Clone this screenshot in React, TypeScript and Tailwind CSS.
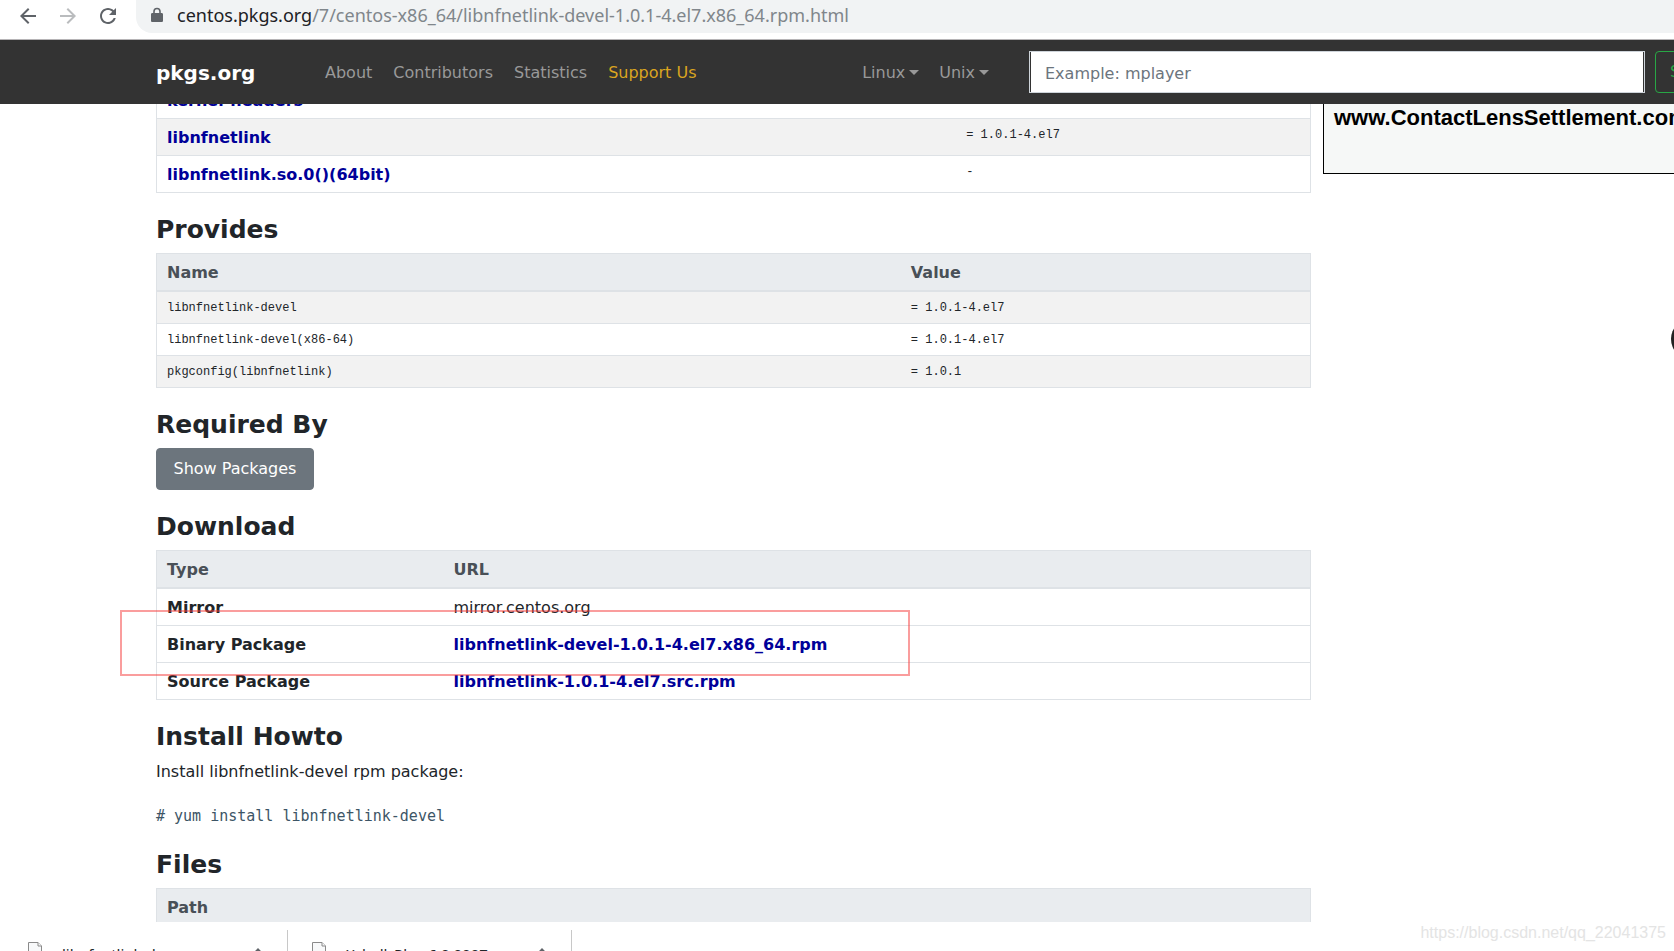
import type { ReactNode } from 'react'

const REQUIRES = [
  { name: 'kernel-headers', value: '' },
  { name: 'libnfnetlink', value: '= 1.0.1-4.el7' },
  { name: 'libnfnetlink.so.0()(64bit)', value: '-' },
]

const PROVIDES = [
  { name: 'libnfnetlink-devel', value: '= 1.0.1-4.el7' },
  { name: 'libnfnetlink-devel(x86-64)', value: '= 1.0.1-4.el7' },
  { name: 'pkgconfig(libnfnetlink)', value: '= 1.0.1' },
]

const DOWNLOADS = [
  { type: 'Binary Package', file: 'libnfnetlink-devel-1.0.1-4.el7.x86_64.rpm' },
  { type: 'Source Package', file: 'libnfnetlink-1.0.1-4.el7.src.rpm' },
]

const mono = "font-['Liberation_Mono',monospace] text-xs leading-[19px]"
const cell = 'border border-[#dee2e6] px-2.5 pb-[5px] pt-[7px] text-left'
const headCell =
  'border border-b-2 border-[#dee2e6] bg-[#e9ecef] px-2.5 pb-[5px] pt-[7px] text-left font-bold text-[#495057]'
const fileLink = 'font-bold text-[#000099]'

function BrowserBar() {
  return (
    <div className="flex h-10 shrink-0 items-start border-b border-[#b6b4b6] bg-white">
      <div className="flex h-8 items-center gap-4 px-4">
        <button aria-label="Back" className="h-6 w-6 text-[#5f6368]">
          <svg viewBox="0 0 24 24" className="h-6 w-6" fill="currentColor">
            <path d="M20 11H7.83l5.59-5.59L12 4l-8 8 8 8 1.41-1.41L7.83 13H20v-2z" />
          </svg>
        </button>
        <button aria-label="Forward" className="h-6 w-6 text-[#babcbe]">
          <svg viewBox="0 0 24 24" className="h-6 w-6" fill="currentColor">
            <path d="M12 4l-1.41 1.41L16.17 11H4v2h12.17l-5.58 5.59L12 20l8-8z" />
          </svg>
        </button>
        <button aria-label="Reload" className="h-6 w-6 text-[#5f6368]">
          <svg viewBox="0 0 24 24" className="h-6 w-6" fill="currentColor">
            <path d="M17.65 6.35C16.2 4.9 14.21 4 12 4c-4.42 0-7.99 3.58-7.99 8s3.57 8 7.99 8c3.73 0 6.84-2.55 7.73-6h-2.08c-.82 2.33-3.04 4-5.65 4-3.31 0-6-2.69-6-6s2.69-6 6-6c1.66 0 3.14.69 4.22 1.78L13 11h7V4l-2.35 2.35z" />
          </svg>
        </button>
      </div>
      <div className="flex h-[33px] flex-1 items-center gap-3.5 rounded-bl-2xl bg-[#f1f3f4] pb-[3px] pl-[15px]">
        <svg viewBox="0 0 12 16" className="h-4 w-3" fill="#5f6368">
          <path d="M10.7 6H9.8V4.6a3.8 3.8 0 0 0-7.6 0V6h-.9C.6 6 0 6.6 0 7.3v6.4c0 .7.6 1.3 1.3 1.3h9.4c.7 0 1.3-.6 1.3-1.3V7.3C12 6.6 11.4 6 10.7 6zM8.2 6H3.8V4.5a2.2 2.2 0 0 1 4.4 0V6z" />
        </svg>
        <div className="whitespace-nowrap font-['Noto_Sans',sans-serif] text-lg leading-6 text-[#80868b]">
          <span className="text-[#202124]">centos.pkgs.org</span>
          /7/centos-x86_64/libnfnetlink-devel-1.0.1-4.el7.x86_64.rpm.html
        </div>
      </div>
    </div>
  )
}

function Caret() {
  return (
    <span className="ml-1 inline-block border-x-[5px] border-t-[5px] border-x-transparent border-t-current align-[3px]" />
  )
}

function Navbar() {
  return (
    <header className="z-10 flex h-16 shrink-0 items-center bg-[#333333] pl-[156px] text-[#999999]">
      <a href="#" className="w-[159px] pt-0.5 text-xl font-bold leading-[30px] text-white">
        pkgs.org
      </a>
      <nav className="flex flex-1 gap-px whitespace-nowrap pt-0.5">
        <a href="#about" className="px-2.5">About</a>
        <a href="#contributors" className="px-2.5">Contributors</a>
        <a href="#statistics" className="px-2.5">Statistics</a>
        <a href="#support" className="px-2.5 text-[#daa520]">Support Us</a>
      </nav>
      <div className="mr-[30px] flex whitespace-nowrap pt-0.5">
        <button className="px-2.5">Linux<Caret /></button>
        <button className="px-2.5">Unix<Caret /></button>
      </div>
      <form className="flex w-[645px] shrink-0 gap-2.5 overflow-hidden">
        <div className="w-[616px] shrink-0 border border-[#ced4da] px-px">
          <input
            type="text"
            aria-label="Search packages"
            placeholder="Example: mplayer"
            className="block h-10 w-full bg-white px-3.5 pt-0.5 text-base text-[#495057] placeholder:text-[#6c757d]"
          />
        </div>
        <button className="shrink-0 rounded border border-[#28a745] px-3.5 text-[#28a745]">
          Search
        </button>
      </form>
    </header>
  )
}

function Heading({ children }: { children: ReactNode }) {
  return (
    <h2 className="mb-2 mt-[22px] text-[25px] font-bold leading-[30px] text-[#212529]">
      {children}
    </h2>
  )
}

function RequiresTable() {
  return (
    <table className="w-full table-fixed border-collapse">
      <colgroup>
        <col className="w-[69.3%]" />
        <col />
      </colgroup>
      <tbody>
        {REQUIRES.map((row) => (
          <tr key={row.name} className="even:bg-[#f2f2f2]">
            <td className={`${cell} border-r-0`}>
              <a href="#" className={fileLink}>{row.name}</a>
            </td>
            <td className={`${cell} ${mono} border-l-0 align-top`}>{row.value}</td>
          </tr>
        ))}
      </tbody>
    </table>
  )
}

function ProvidesTable() {
  return (
    <table className="w-full table-fixed border-collapse">
      <colgroup>
        <col className="w-[64.5%]" />
        <col />
      </colgroup>
      <thead>
        <tr>
          <th className={`${headCell} border-r-0`}>Name</th>
          <th className={`${headCell} border-l-0`}>Value</th>
        </tr>
      </thead>
      <tbody>
        {PROVIDES.map((row) => (
          <tr key={row.name} className="odd:bg-[#f2f2f2]">
            <td className={`${cell} ${mono} border-r-0`}>{row.name}</td>
            <td className={`${cell} ${mono} border-l-0`}>{row.value}</td>
          </tr>
        ))}
      </tbody>
    </table>
  )
}

function DownloadTable() {
  return (
    <div className="relative">
      <table className="w-full table-fixed border-collapse">
        <colgroup>
          <col className="w-[287px]" />
          <col />
        </colgroup>
        <thead>
          <tr>
            <th className={`${headCell} border-r-0`}>Type</th>
            <th className={`${headCell} border-l-0`}>URL</th>
          </tr>
        </thead>
        <tbody>
          <tr>
            <th className={`${cell} border-r-0`}>Mirror</th>
            <td className={`${cell} border-l-0`}>mirror.centos.org</td>
          </tr>
          {DOWNLOADS.map((row) => (
            <tr key={row.file}>
              <th className={`${cell} border-r-0`}>{row.type}</th>
              <td className={`${cell} border-l-0`}>
                <a href="#" className={fileLink}>{row.file}</a>
              </td>
            </tr>
          ))}
        </tbody>
      </table>
      {/* marker around the binary package row */}
      <div className="pointer-events-none absolute -left-9 top-[60px] h-[66px] w-[790px] border-2 border-[#f53b3b]/50" />
    </div>
  )
}

function DownloadItem({ name }: { name: string }) {
  return (
    <div className="flex w-[284px] items-start justify-between border-r border-[#c8c8c8] pl-6 pr-6 pt-3">
      <div className="flex gap-5">
        <svg viewBox="0 0 14 18" className="h-[18px] w-3.5" fill="#f8f9fa" stroke="#8a8a8a">
          <path d="M.5.5h9.5l3.5 3.5v13.5H.5z" />
          <path d="M10 .5V4h3.5" />
        </svg>
        <span className="whitespace-nowrap pt-0.5 font-['Noto_Sans',sans-serif] text-[15px] leading-5">
          {name}
        </span>
      </div>
      <button aria-label="Show menu" className="pt-1.5">
        <svg viewBox="0 0 10 6" className="h-1.5 w-2.5" fill="none" stroke="#5f6368" strokeWidth="2">
          <path d="M1 5.5l4-4 4 4" />
        </svg>
      </button>
    </div>
  )
}

export default function App() {
  return (
    <div className="relative flex h-screen flex-col overflow-hidden bg-white font-['DejaVu_Sans',sans-serif] text-base text-[#212529]">
      <BrowserBar />
      <Navbar />
      <div className="relative flex min-h-0 flex-1 gap-3 overflow-hidden pl-[156px]">
        {/* page is scrolled, the first row sits under the navbar */}
        <main className="-mt-[23px] min-w-0 flex-1">
          <RequiresTable />
          <Heading>Provides</Heading>
          <ProvidesTable />
          <Heading>Required By</Heading>
          <button className="block w-[158px] rounded border border-[#6c757d] bg-[#6c757d] py-2 text-white">
            Show Packages
          </button>
          <Heading>Download</Heading>
          <DownloadTable />
          <Heading>Install Howto</Heading>
          <p>Install libnfnetlink-devel rpm package:</p>
          <pre className="mt-5 font-['DejaVu_Sans_Mono',monospace] text-[15px] leading-6 text-[#3d5566]">
            # yum install libnfnetlink-devel
          </pre>
          <Heading>Files</Heading>
          <table className="w-full border-collapse">
            <thead>
              <tr>
                <th className={headCell}>Path</th>
              </tr>
            </thead>
          </table>
        </main>
        <aside className="w-[351px] shrink-0 overflow-hidden">
          <div className="h-[70px] whitespace-nowrap border-b border-l border-black bg-[#f6f8f7] pl-2.5 font-['Liberation_Sans',sans-serif] text-[22px] font-bold leading-7 text-black">
            www.ContactLensSettlement.com
          </div>
        </aside>
        <div className="absolute -right-[37px] top-[215px] h-10 w-10 rounded-full bg-[#222222]" />
      </div>
      <footer className="flex h-[29px] shrink-0 overflow-hidden bg-white pl-1 pt-2">
        <DownloadItem name="libnfnetlink-de....rpm" />
        <DownloadItem name="Xshell_Plus-6.0.0007....exe" />
      </footer>
      <div className="absolute bottom-2 right-2 font-['Liberation_Sans',sans-serif] text-base leading-5 text-[#e4e4e4]">
        https://blog.csdn.net/qq_22041375
      </div>
    </div>
  )
}
